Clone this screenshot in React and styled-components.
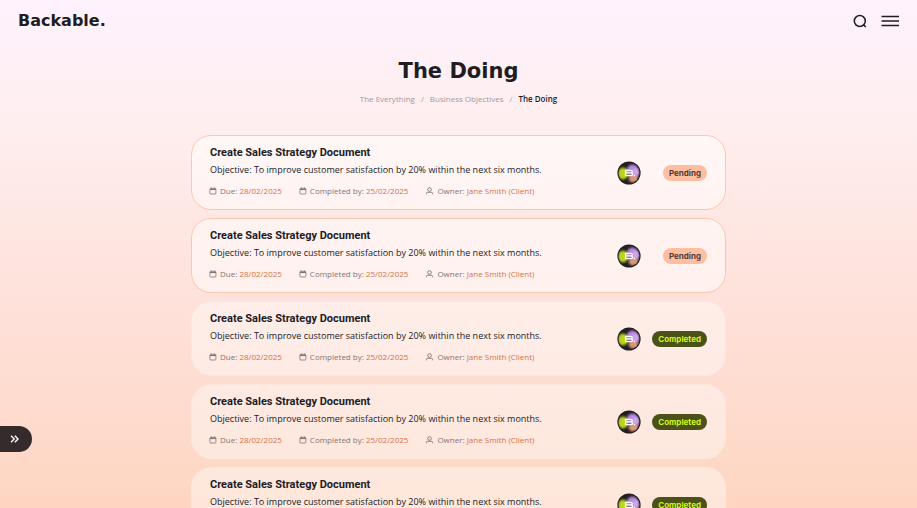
import React from 'react';
import styled, { createGlobalStyle } from 'styled-components';

const GlobalStyle = createGlobalStyle`
  * {
    box-sizing: border-box;
  }

  body {
    margin: 0;
    color: #211c1f;
    font-family: 'Open Sans', sans-serif;
  }

  button {
    padding: 0;
    border: 0;
    background: none;
    font: inherit;
    cursor: pointer;
  }
`;

const Page = styled.div`
  height: 100vh;
  overflow: hidden;
  background: linear-gradient(180deg, #fef2fe 0%, #feeeee 25%, #fee1da 60%, #fed6c2 100%);
`;

const Header = styled.header`
  display: flex;
  align-items: center;
  justify-content: space-between;
  height: 42px;
  padding: 0 18px;
`;

const Logo = styled.a`
  color: #211c1f;
  font-family: 'DejaVu Sans', sans-serif;
  font-size: 16px;
  font-weight: 700;
  line-height: 20px;
  text-decoration: none;
`;

const HeaderActions = styled.div`
  display: flex;
  align-items: center;
  gap: 14px;
`;

const IconButton = styled.button`
  display: flex;
  color: #211c1f;
`;

const Main = styled.main`
  width: 100%;
  max-width: 535px;
  margin: 0 auto;
  padding-top: 16px;
`;

const PageTitle = styled.h1`
  margin: 0;
  font-family: 'DejaVu Sans', sans-serif;
  font-size: 21px;
  font-weight: 700;
  line-height: 26px;
  text-align: center;
`;

const Breadcrumb = styled.nav`
  display: flex;
  justify-content: center;
  gap: 6px;
  margin: 8px 0 30px;
  color: #a5989c;
  font-size: 8px;
  line-height: 13px;
`;

const Crumb = styled.a`
  color: ${(props) => (props.$current ? '#211c1f' : '#a5989c')};
  font-weight: ${(props) => (props.$current ? 600 : 400)};
  text-decoration: none;
`;

const TaskList = styled.ul`
  display: flex;
  flex-direction: column;
  gap: 8px;
  margin: 0;
  padding: 0;
  list-style: none;
`;

const Card = styled.li`
  display: flex;
  align-items: center;
  justify-content: space-between;
  padding: 0 18px;
  border: 1px solid ${(props) => (props.$pending ? '#fdc7ae' : '#fde7dc')};
  border-radius: 20px;
  background: ${(props) => (props.$pending ? 'rgba(255, 255, 255, .5)' : 'rgba(255, 255, 255, .4)')};
`;

const TaskInfo = styled.div`
  padding: 8px 0 11px;
`;

const TaskTitle = styled.h2`
  margin: 0;
  font-family: Roboto, sans-serif;
  font-size: 11px;
  font-weight: 700;
  line-height: 18px;
`;

const Objective = styled.p`
  margin: 0 0 6px;
  font-size: 9px;
  line-height: 16px;
`;

const MetaRow = styled.div`
  display: flex;
  gap: 18px;
`;

const Meta = styled.div`
  display: flex;
  align-items: center;
  gap: 4px;
  color: #827477;
  font-size: 8px;
  line-height: 14px;
  white-space: nowrap;
`;

const MetaValue = styled.span`
  color: #d5714a;
`;

const Status = styled.div`
  display: flex;
  align-items: center;
`;

const Slot = styled.div`
  display: flex;
  justify-content: flex-end;
  width: 66px;
`;

const Badge = styled.span`
  padding: 0 6px;
  border-radius: 8px;
  background: ${(props) => (props.$pending ? '#fdbea2' : '#4b5219')};
  color: ${(props) => (props.$pending ? '#553a32' : '#d3f515')};
  font-family: Inter, sans-serif;
  font-size: 8px;
  font-weight: 700;
  line-height: 16px;
`;

const DrawerButton = styled.button`
  position: fixed;
  bottom: 56px;
  left: 0;
  display: flex;
  align-items: center;
  justify-content: center;
  width: 32px;
  height: 26px;
  padding-right: 3px;
  border-radius: 0 13px 13px 0;
  background: #352b2d;
  color: #fff;
`;

const tasks = [
  { id: 1, status: 'Pending' },
  { id: 2, status: 'Pending' },
  { id: 3, status: 'Completed' },
  { id: 4, status: 'Completed' },
  { id: 5, status: 'Completed' },
].map((task) => ({
  ...task,
  title: 'Create Sales Strategy Document',
  objective: 'To improve customer satisfaction by 20% within the next six months.',
  due: '28/02/2025',
  completedBy: '25/02/2025',
  owner: 'Jane Smith (Client)',
}));

function SearchIcon() {
  return (
    <svg width="14" height="14" viewBox="0 0 14 14" fill="none" stroke="currentColor" strokeWidth="1.5">
      <circle cx="6.8" cy="7" r="5.5" />
      <path d="M10.2 10.4 12.8 13" />
    </svg>
  );
}

function MenuIcon() {
  return (
    <svg width="18" height="12" viewBox="0 0 18 12" stroke="currentColor" strokeWidth="1.3">
      <path d="M.5 1.5h17.5M.5 6h17.5M.5 10.5h17.5" />
    </svg>
  );
}

function CalendarIcon() {
  return (
    <svg width="6" height="8" viewBox="0 0 6 8" overflow="visible" fill="none" stroke="currentColor" strokeWidth=".8">
      <rect x="-.1" y="1.3" width="6" height="5.7" rx=".8" />
      <path d="M0 2.4h6" strokeWidth="1.3" />
      <path d="M1.4 .4v1M4.5 .4v1" />
    </svg>
  );
}

function PersonIcon() {
  return (
    <svg width="7" height="8" viewBox="0 0 7 8" overflow="visible" fill="none" stroke="currentColor" strokeWidth=".9">
      <circle cx="3.5" cy="2.5" r="1.8" />
      <path d="M.3 7.3V6.7Q.3 5.3 1.7 5.3H5.3Q6.7 5.3 6.7 6.7V7.3" />
    </svg>
  );
}

function Avatar({ id }) {
  return (
    <svg width="24" height="24" viewBox="0 0 24 24" role="img" aria-label="Backable">
      <defs>
        <clipPath id={`clip${id}`}>
          <circle cx="12" cy="12" r="10.6" />
        </clipPath>
        <filter id={`blur${id}`} x="-50%" y="-50%" width="200%" height="200%">
          <feGaussianBlur stdDeviation="1.2" />
        </filter>
      </defs>
      <circle cx="12" cy="12" r="11.6" fill="#211d20" />
      <g clipPath={`url(#clip${id})`}>
        <g filter={`url(#blur${id})`}>
          <ellipse cx="6" cy="12.5" rx="5" ry="6" fill="#b9d51c" />
          <ellipse cx="15.5" cy="9" rx="5.5" ry="5.5" fill="#b78ae0" />
          <ellipse cx="19" cy="11" rx="3.5" ry="4.5" fill="#cfa6ee" />
          <ellipse cx="16.5" cy="17.5" rx="5" ry="4" fill="#d99678" />
        </g>
      </g>
      <g fill="none" stroke="#fff" strokeWidth="1.3">
        <path d="M8.5 9.4h5.5q1.2 0 1.2 1.2t-1.2 1.3H8.5M14 11.9q1.6 0 1.6 1.3t-1.6 1.4H8.5V8.8" />
      </g>
      <circle cx="17.4" cy="14.6" r=".8" fill="#fff" />
    </svg>
  );
}

function ChevronsIcon() {
  return (
    <svg width="9" height="8" viewBox="0 0 9 8" fill="none" stroke="currentColor" strokeWidth="1.4">
      <path d="M1 .8 4.2 4 1 7.2M4.8 .8 8 4 4.8 7.2" />
    </svg>
  );
}

function TaskCard({ task }) {
  const pending = task.status === 'Pending';

  return (
    <Card $pending={pending}>
      <TaskInfo>
        <TaskTitle>{task.title}</TaskTitle>
        <Objective>Objective: {task.objective}</Objective>
        <MetaRow>
          <Meta>
            <CalendarIcon />
            <span>Due: <MetaValue>{task.due}</MetaValue></span>
          </Meta>
          <Meta>
            <CalendarIcon />
            <span>Completed by: <MetaValue>{task.completedBy}</MetaValue></span>
          </Meta>
          <Meta>
            <PersonIcon />
            <span>Owner: <MetaValue>{task.owner}</MetaValue></span>
          </Meta>
        </MetaRow>
      </TaskInfo>
      <Status>
        <Avatar id={task.id} />
        <Slot>
          <Badge $pending={pending}>{task.status}</Badge>
        </Slot>
      </Status>
    </Card>
  );
}

export default function App() {
  return (
    <Page>
      <GlobalStyle />
      <Header>
        <Logo href="#">Backable.</Logo>
        <HeaderActions>
          <IconButton aria-label="Search"><SearchIcon /></IconButton>
          <IconButton aria-label="Menu"><MenuIcon /></IconButton>
        </HeaderActions>
      </Header>
      <Main>
        <PageTitle>The Doing</PageTitle>
        <Breadcrumb aria-label="Breadcrumb">
          <Crumb href="#">The Everything</Crumb>
          <span>/</span>
          <Crumb href="#">Business Objectives</Crumb>
          <span>/</span>
          <Crumb href="#" $current aria-current="page">The Doing</Crumb>
        </Breadcrumb>
        <TaskList>
          {tasks.map((task) => <TaskCard key={task.id} task={task} />)}
        </TaskList>
      </Main>
      <DrawerButton aria-label="Open sidebar"><ChevronsIcon /></DrawerButton>
    </Page>
  );
}
